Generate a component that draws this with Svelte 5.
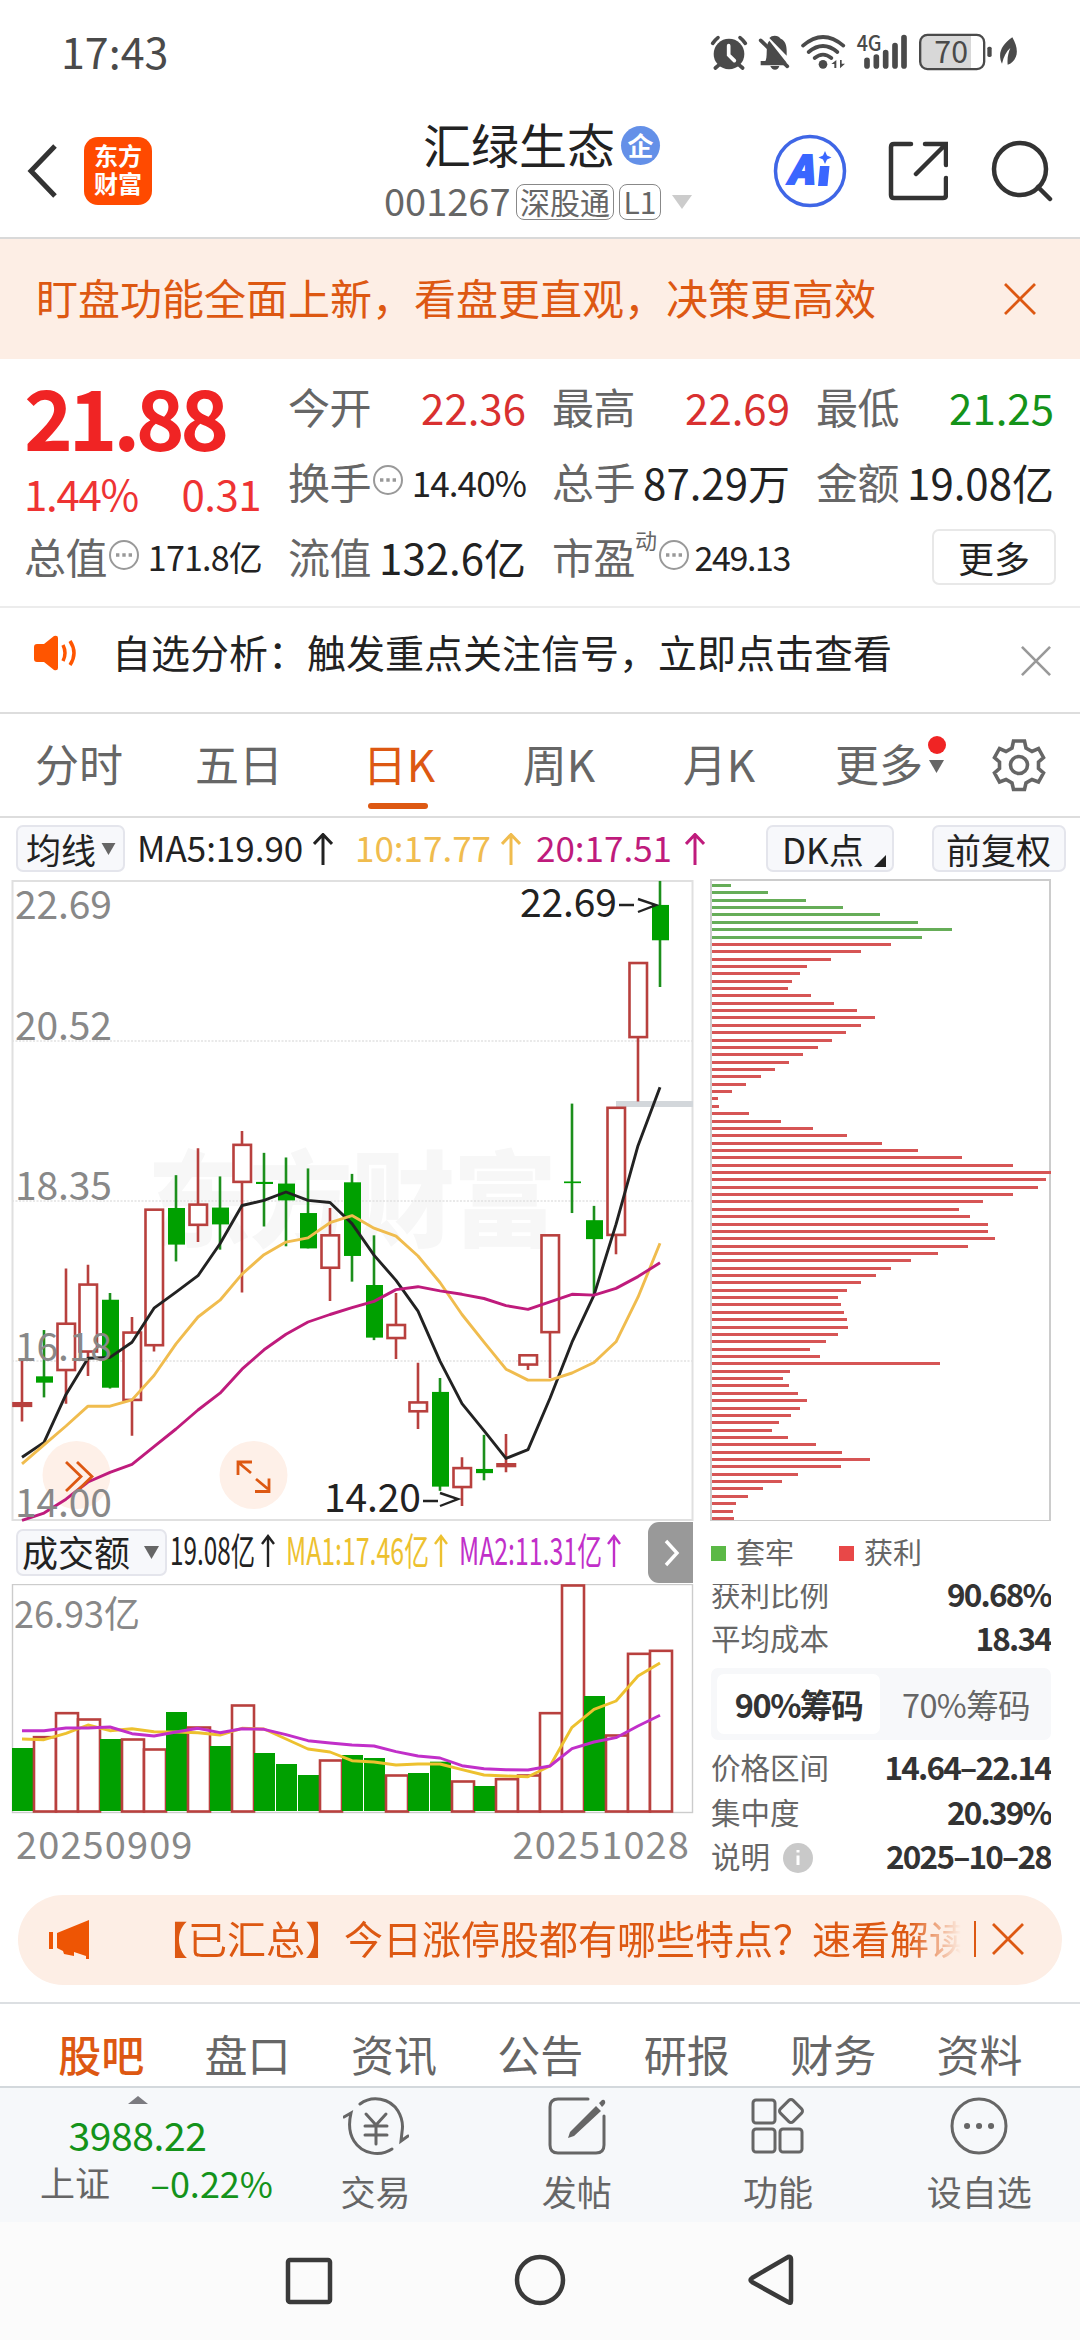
<script>
	let period = $state('日K')
	let section = $state('股吧')
	let chipRange = $state('90%筹码')

	const periods = ['分时', '五日', '日K', '周K', '月K', '更多']
	const sections = ['股吧', '盘口', '资讯', '公告', '研报', '财务', '资料']

	const x = i => 22 + i * 22
	const priceY = v => v * 0.4209 - 9
	const volumeY = v => (v - 222) / 3
	const line = (values, y) => values.map((v, i) => `${x(i)},${y(v).toFixed(1)}`).join(' ')

	// up, high, body top, body bottom, low
	const candles = [
		[1, 1165, 1267, 1273, 1310],
		[0, 1093, 1203, 1218, 1253],
		[1, 947, 1078, 1188, 1268],
		[1, 938, 985, 1144, 1202],
		[0, 1005, 1021, 1230, 1232],
		[1, 1062, 1099, 1259, 1344],
		[1, 807, 807, 1129, 1144],
		[0, 725, 803, 890, 930],
		[1, 661, 795, 843, 884],
		[0, 728, 802, 842, 902],
		[1, 620, 653, 741, 1004],
		[0, 672, 741, 746, 847],
		[0, 683, 745, 785, 894],
		[0, 709, 815, 899, 899],
		[1, 803, 868, 945, 1024],
		[0, 722, 742, 917, 978],
		[0, 868, 986, 1111, 1117],
		[1, 1005, 1081, 1112, 1162],
		[1, 1171, 1265, 1286, 1328],
		[0, 1207, 1240, 1465, 1475],
		[1, 1395, 1421, 1466, 1511],
		[0, 1342, 1423, 1433, 1450],
		[1, 1340, 1412, 1416, 1431],
		[1, 1153, 1153, 1175, 1188],
		[1, 868, 868, 1098, 1207],
		[0, 555, 740, 744, 815],
		[0, 798, 832, 877, 1010],
		[1, 565, 565, 867, 913],
		[1, 221, 221, 397, 550],
		[0, 26, 83, 167, 278]
	]

	const ma5 = [1395, 1360, 1246, 1160, 1158, 1122, 1041, 1003, 964, 888, 797, 785, 765, 785, 790, 840, 915, 975, 1048, 1167, 1268, 1332, 1398, 1377, 1255, 1122, 1010, 842, 655, 516]
	const ma10 = [1411, 1366, 1321, 1274, 1274, 1259, 1201, 1126, 1062, 1022, 960, 914, 884, 874, 838, 821, 851, 870, 917, 980, 1056, 1122, 1186, 1212, 1212, 1195, 1170, 1121, 1015, 887]
	const ma20 = [1545, 1528, 1495, 1454, 1431, 1412, 1370, 1328, 1283, 1243, 1186, 1140, 1103, 1074, 1056, 1040, 1025, 997, 990, 1000, 1008, 1018, 1035, 1044, 1026, 1008, 1010, 994, 966, 933]

	const volumes = [714, 680, 608, 627, 687, 687, 717, 606, 651, 708, 585, 729, 762, 795, 750, 735, 744, 795, 789, 755, 813, 828, 806, 795, 608, 225, 558, 675, 430, 421]
	const volumeUp = [0, 1, 1, 1, 0, 1, 1, 0, 1, 0, 1, 0, 0, 0, 1, 0, 0, 1, 0, 0, 1, 0, 1, 1, 1, 1, 0, 1, 1, 1]
	const volMa1 = [687, 689, 670, 645, 662, 656, 665, 666, 668, 675, 655, 657, 687, 717, 726, 752, 756, 765, 762, 762, 779, 795, 798, 800, 768, 652, 598, 573, 498, 459]
	const volMa2 = [662, 662, 654, 654, 651, 671, 678, 666, 655, 668, 656, 658, 674, 692, 699, 705, 708, 725, 738, 744, 767, 776, 779, 780, 768, 716, 696, 683, 648, 616]

	const trapped = 8
	const chips = [
		57, 168, 281, 393, 505, 617, 719, 629,
		537, 446, 356, 285, 263, 241, 228, 297, 367, 435,
		488, 446, 402, 359, 317, 274, 231, 188, 146, 103,
		60, 17, 22, 110, 206, 302, 404, 509, 617, 749,
		902, 1017, 1001, 978, 903, 813, 741, 775, 828, 827,
		848, 769, 679, 597, 538, 493, 446, 404, 377, 388,
		396, 405, 407, 377, 341, 295, 325, 683, 233, 214,
		232, 259, 286, 263, 237, 200, 180, 229, 313, 389,
		473, 387, 258, 209, 153, 109, 71, 63, 66
	]
</script>

{#snippet cross(size)}
	<svg class="cross" width={size} height={size} viewBox="0 0 32 32">
		<path d="M1 1 31 31M31 1 1 31" />
	</svg>
{/snippet}

{#snippet dots()}
	<svg class="dots" width="32" height="32" viewBox="0 0 32 32">
		<circle cx="16" cy="16" r="14" />
		<path d="M8 16h3.4M14.3 16h3.4M20.6 16h3.4" />
	</svg>
{/snippet}

{#snippet arrow()}
	<svg class="arrow" width="20" height="32" viewBox="0 0 20 32">
		<path d="M10 32V2M1 11 10 1.500l9 9.500" />
	</svg>
{/snippet}

<div class="screen">
	<div class="status">
		<span class="clock">17:43</span>
		<svg width="310" height="40" viewBox="330 35 930 120">
			<g class="ink">
				<circle cx="387" cy="101" r="46" />
				<path d="M494 125c12-12 0-50 14-64l52 66h-70zM482 122h72v13h-72zM508 53q6-7 16-7 12 0 18 9c14 6 18 20 18 36v15z" />
				<path d="M511 137h27q-3 11-13 11t-14-11z" />
				<circle cx="669" cy="132" r="13" />
				<path d="M694 131l15-12v24h-6v-12zM735 130l-15 14v-25h5v11z" />
				<path d="M1206 130c-14-30-2-56 31-79 16 28 20 56 0 74q-6 6-14 8c-2-20 2-36 8-50-12 10-20 26-25 47z" />
				<rect x="1162" y="79" width="13" height="31" rx="5" />
			</g>
			<g class="thick">
				<path d="M338 69q7-10 16-17M436 69q-7-10-16-17M358 133l-12 10M416 133l12 10" />
				<path d="M482 60l80 78" />
				<path d="M609 76q60-52 121 0M626 95q43-36 86 0M644 113q25-20 50 0" />
			</g>
			<path class="hand" d="M386 76v28l17 17" />
			<path class="signal" d="M801 120v17M829 110v27M857 97v40M885 76v61M912 52v85" />
			<text class="net" x="770" y="92" textLength="75" lengthAdjust="spacingAndGlyphs">4G</text>
			<path class="charge" d="M980 44h133v101H980q-20 0-20-22V66q0-22 20-22z" />
			<rect class="cell" x="960.500" y="43.500" width="192" height="103" rx="22" />
			<text class="level" x="1003" y="129" textLength="101" lengthAdjust="spacingAndGlyphs">70</text>
		</svg>
	</div>

	<header>
		<div class="lead">
			<svg width="31" height="56" viewBox="0 0 31 56"><path class="back" d="M28 3 4 28l24 25" /></svg>
			<div class="brand"><span>东方</span><span>财富</span></div>
		</div>
		<div class="title">
			<div class="name">汇绿生态<span class="firm">企</span></div>
			<div class="code">
				<span class="num">001267</span>
				<span class="tag">深股通</span>
				<span class="tag level1">L1</span>
				<svg width="22" height="15" viewBox="0 0 22 15"><path d="M1 0h20L11 14z" fill="#ccc" /></svg>
			</div>
		</div>
		<div class="actions">
			<svg width="74" height="74" viewBox="0 0 74 74">
				<circle class="ai-ring" cx="37" cy="37" r="34.500" />
				<text class="ai" x="14" y="50" textLength="26" lengthAdjust="spacingAndGlyphs">A</text>
				<path d="M47 32h9.500l-2 20H45zM52 17l2 4.500 4.500 2-4.500 2-2 4.500-2-4.500-4.500-2 4.500-2z" fill="#3a66ff" />
			</svg>
			<svg width="60" height="60" viewBox="0 0 60 60">
				<path class="stroke" d="M23 3H6Q3 3 3 6v48q0 3 3 3h49q3 0 3-3V37M37 3h21v21M57 4 28 33" />
			</svg>
			<svg width="62" height="62" viewBox="0 0 62 62">
				<circle class="stroke" cx="29" cy="29" r="26" />
				<path class="stroke" d="M47 47l12 12" />
			</svg>
		</div>
	</header>

	<div class="banner">
		<span>盯盘功能全面上新，看盘更直观，决策更高效</span>
		{@render cross(32)}
	</div>

	<section class="quote">
		<div class="last">
			<strong>21.88</strong>
			<p><span>1.44%</span><span>0.31</span></p>
			<div class="cell-row"><label>总值</label>{@render dots()}<b class="small">171.8亿</b></div>
		</div>
		<div class="cells">
			<div class="cell-row"><label>今开</label><b class="up">22.36</b></div>
			<div class="cell-row"><label>最高</label><b class="up">22.69</b></div>
			<div class="cell-row"><label>最低</label><b class="down">21.25</b></div>
			<div class="cell-row"><label>换手</label>{@render dots()}<b class="small">14.40%</b></div>
			<div class="cell-row"><label>总手</label><b>87.29万</b></div>
			<div class="cell-row"><label>金额</label><b>19.08亿</b></div>
			<div class="cell-row"><label>流值</label><b>132.6亿</b></div>
			<div class="cell-row"><label>市盈<sup>动</sup></label>{@render dots()}<b class="small pe">249.13</b></div>
			<div class="cell-row"><button class="more">更多</button></div>
		</div>
	</section>

	<div class="notice">
		<svg width="46" height="36" viewBox="0 0 46 36">
			<path d="M4 9h7L21 1q4-1 4 2v30q0 3-4 2L11 27H4q-3 0-3-3V12q0-3 3-3z" fill="#ff5500" />
			<path class="wave" d="M30 10q4 8 0 16M37 6q8 12 0 24" />
		</svg>
		<span>自选分析：触发重点关注信号，立即点击查看</span>
		{@render cross(30)}
	</div>

	<nav class="periods">
		{#each periods as name}
			<button class={{ active: period === name }} onclick={() => period = name}>
				{name}
				{#if name === '更多'}
					<i class="dot"></i>
					<svg class="caret" width="15" height="13" viewBox="0 0 15 13"><path d="M0 0h15L7.500 13z" /></svg>
				{/if}
			</button>
		{/each}
		<svg class="gear" width="54" height="54" viewBox="0 0 54 54">
			<path d="M21.500 3h11l1.500 7 6 3.500 6.500-3 5 9-5 4.500v6.500l5 4.500-5 9-6.500-2.500-6 3.500-1.500 6.500h-11l-1.500-6.500-6-3.500L7.500 44l-5-9 5-4.500V24l-5-4.500 5-9 6.500 3 6-3.500z" />
			<circle cx="27" cy="27" r="8.500" />
		</svg>
	</nav>

	<div class="tools">
		<button class="chip line">均线<svg class="caret" width="15" height="12" viewBox="0 0 15 13"><path d="M0 0h15L7.500 13z" /></svg></button>
		<span class="ma m5">MA5:19.90{@render arrow()}</span>
		<span class="ma m10">10:17.77{@render arrow()}</span>
		<span class="ma m20">20:17.51{@render arrow()}</span>
		<button class="chip dk">DK点<svg width="12" height="12" viewBox="0 0 12 12"><path d="M12 0v12H0z" fill="#222" /></svg></button>
		<button class="chip adj">前复权</button>
	</div>

	<div class="board">
		<div class="left">
			<svg class="kline" width="700" height="643" viewBox="0 0 700 643">
				<text class="watermark" x="147" y="360" textLength="410">东方财富</text>
				<path class="grid" d="M12 162h681M12 322h681M12 482h681" />
				<rect class="frame" x="12.500" y="2" width="680" height="639" />
				<path d="M616 225h77" stroke="#d3d7db" stroke-width="6" />
				<circle cx="76.500" cy="596" r="34" fill="#fef0e8" />
				<circle cx="253.500" cy="596" r="34" fill="#fef0e8" />
				{#each candles as [up, high, top, bottom, low], i}
					{#if up}
						<path class="rise" d="M{x(i)} {priceY(high)}V{priceY(top)}M{x(i)} {priceY(bottom)}V{priceY(low)}" />
						<rect class="rise" x={x(i) - 8.5} y={priceY(top)} width="17.500" height={priceY(bottom) - priceY(top)} />
					{:else}
						<path class="fall" d="M{x(i)} {priceY(high)}V{priceY(low)}" />
						<rect x={x(i) - 8} y={priceY(top)} width="17" height={priceY(bottom) - priceY(top)} fill="#00a000" />
					{/if}
				{/each}
				<polyline points={line(ma5, priceY)} stroke="#222" />
				<polyline points={line(ma10, priceY)} stroke="#f0bc4e" />
				<polyline points={line(ma20, priceY)} stroke="#bf1b7c" />
				<path class="glyph" d="M66 583l15 14.500L66 612M77 583l15 14.500L77 612" />
				<path class="glyph" d="M252 583h-14v13M239 584l12 10M256 600l12 10M255 612.500h14v-13" />
				<g class="axis">
					<text x="15" y="40" textLength="97">22.69</text>
					<text x="15" y="161" textLength="97">20.52</text>
					<text x="15" y="321" textLength="97">18.35</text>
					<text x="15" y="482" textLength="97">16.18</text>
					<text x="15" y="638" textLength="97">14.00</text>
				</g>
				<g class="mark">
					<text x="520" y="38" textLength="97">22.69</text>
					<text x="324" y="633" textLength="97">14.20</text>
					<path d="M619 26h15M638 20l18 6-18 7M423 622h15M440 614l18 6-18 7" />
				</g>
			</svg>

			<div class="volume-tools">
				<button class="chip turnover">成交额<svg class="caret" width="15" height="13" viewBox="0 0 15 13"><path d="M0 0h15L7.500 13z" /></svg></button>
				<svg class="volume-ma" width="460" height="62" viewBox="170 0 460 62">
					<text x="170" y="43" textLength="85" lengthAdjust="spacingAndGlyphs" fill="#222">19.08亿</text>
					<path d="M268 45V14M262 22l6-8 6 8" stroke="#222" />
					<text x="286" y="43" textLength="143" lengthAdjust="spacingAndGlyphs" fill="#edc12f">MA1:17.46亿</text>
					<path d="M441 45V14M435 22l6-8 6 8" stroke="#edc12f" />
					<text x="459" y="43" textLength="143" lengthAdjust="spacingAndGlyphs" fill="#c12fc9">MA2:11.31亿</text>
					<path d="M614 45V14M608 22l6-8 6 8" stroke="#c12fc9" />
				</svg>
				<button class="next"><svg width="16" height="28" viewBox="0 0 16 28"><path d="M2 2l11 12L2 26" /></svg></button>
			</div>

			<svg class="volume" width="700" height="230" viewBox="0 0 700 230">
				<rect class="frame" x="12.500" y=".500" width="680" height="228" />
				{#each volumes as v, i}
					{#if volumeUp[i]}
						<rect class="rise" x={x(i) - 10} y={volumeY(v) + .5} width="22" height={227 - volumeY(v)} />
					{:else}
						<rect x={x(i) - 10} y={volumeY(v)} width="21" height={227 - volumeY(v)} fill="#00a000" />
					{/if}
				{/each}
				<polyline points={line(volMa1, volumeY)} stroke="#edc12f" />
				<polyline points={line(volMa2, volumeY)} stroke="#c12fc9" />
				<text x="14" y="44" textLength="126" lengthAdjust="spacingAndGlyphs">26.93亿</text>
			</svg>
			<div class="dates"><span>20250909</span><span>20251028</span></div>
		</div>

		<div class="right">
			<div class="chips">
				{#each chips as w, i}
					<i class={{ trapped: i < trapped }} style:width="{w / 3}px"></i>
				{/each}
			</div>
			<div class="legend"><i class="trapped"></i>套牢<i></i>获利</div>
			<div class="stats">
				<p class="cut"><span>获利比例</span><b>90.68%</b></p>
				<p><span>平均成本</span><b>18.34</b></p>
				<div class="switch">
					{#each ['90%筹码', '70%筹码'] as name}
						<button class={{ on: chipRange === name }} onclick={() => chipRange = name}>{name}</button>
					{/each}
				</div>
				<p><span>价格区间</span><b>14.64–22.14</b></p>
				<p><span>集中度</span><b>20.39%</b></p>
				<p>
					<span>说明</span>
					<svg width="30" height="30" viewBox="0 0 30 30">
						<circle cx="15" cy="15" r="15" fill="#c9c9c9" />
						<path d="M15 12.500V22M15 7v2.500" stroke="#fff" stroke-width="3" />
					</svg>
					<b>2025–10–28</b>
				</p>
			</div>
		</div>
	</div>

	<div class="promo">
		<svg width="48" height="42" viewBox="0 0 48 42">
			<path d="M1 13h4v17H1zM9 14 41 1V40h-3V37l-12-4v4l-10-2-1-3-6-3z" fill="#ee5504" transform="translate(2 0)" />
		</svg>
		<span>【已汇总】今日涨停股都有哪些特点？速看解读</span>
		<i></i>
		{@render cross(32)}
	</div>

	<nav class="sections">
		{#each sections as name}
			<button class={{ active: section === name }} onclick={() => section = name}>{name}</button>
		{/each}
	</nav>

	<footer>
		<div class="index">
			<svg width="20" height="8" viewBox="0 0 20 8"><path d="M10 0l10 8H0z" fill="#7b7b80" /></svg>
			<strong>3988.22</strong>
			<p><span>上证</span><b>–0.22%</b></p>
		</div>
		<button>
			<svg width="66" height="60" viewBox="0 0 66 60">
				<path d="M17 8C29-1 47 2 55 15q6 10 4 21l-1 9 7-5M49 53C37 61 19 58 11 45Q4 34 8 17L1 21" />
				<path d="M23 18l10 11 10-11M33 29v19M22 30h22M22 39h22" />
			</svg>
			交易
		</button>
		<button>
			<svg width="66" height="60" viewBox="0 0 66 60">
				<path d="M44 3H14q-8 0-8 8v38q0 8 8 8h38q8 0 8-8V20" />
				<path d="M52 10l5 5-27 25-6 2 2-6zM55 7l3-3q2-1 3 1t-1 4l-2 2z" fill="#666" stroke="none" />
			</svg>
			发帖
		</button>
		<button>
			<svg width="66" height="60" viewBox="0 0 66 60">
				<rect x="8" y="4" width="22" height="23" rx="3" />
				<rect x="8" y="33" width="22" height="23" rx="3" />
				<rect x="35" y="33" width="22" height="23" rx="3" />
				<rect x="37" y="6" width="18" height="18" rx="3" transform="rotate(45 46 15)" />
			</svg>
			功能
		</button>
		<button>
			<svg width="66" height="60" viewBox="0 0 66 60">
				<circle cx="33" cy="30" r="27" />
				<path class="ellipsis" d="M21 30h.1M33 30h.1M45 30h.1" />
			</svg>
			设自选
		</button>
	</footer>

	<div class="keys">
		<svg width="56" height="56" viewBox="0 0 56 56"><rect x="7" y="8" width="42" height="42" rx="2" /></svg>
		<svg width="56" height="56" viewBox="0 0 56 56"><circle cx="28" cy="28" r="23" /></svg>
		<svg width="56" height="56" viewBox="0 0 56 56"><path d="M48 7v42q0 3-3 1L9 30q-3-2 0-4L45 5q3-1 3 2z" /></svg>
	</div>
</div>

<style>
	:global(body) {
		background: #fff;
	}

	.screen {
		width: 1080px;
		height: 2340px;
		overflow: hidden;
		font-family: "Noto Sans CJK SC", sans-serif;
		color: #222;
		white-space: nowrap;
	}

	.screen :global(*) {
		box-sizing: border-box;
	}

	svg {
		display: block;
		flex: none;
	}

	button {
		padding: 0;
		border: none;
		background: none;
		font: inherit;
		color: inherit;
	}

	p {
		margin: 0;
	}

	.status {
		display: flex;
		align-items: center;
		justify-content: space-between;
		height: 104px;
		padding: 0 60px 0 61px;
	}

	.clock {
		margin-top: -4px;
		font-size: 43px;
		line-height: 62px;
		color: #4a4a4a;
	}

	.ink {
		fill: #4a4a4a;
	}

	.thick,
	.hand,
	.signal,
	.cell {
		fill: none;
		stroke: #4a4a4a;
		stroke-width: 11;
		stroke-linecap: round;
	}

	.hand {
		stroke: #fff;
	}

	.signal {
		stroke-width: 17;
	}

	.cell {
		stroke-width: 7;
	}

	.charge {
		fill: #d8d8d8;
	}

	.net {
		font-size: 64px;
		font-weight: 500;
		fill: #4a4a4a;
	}

	.level {
		font-size: 94px;
		fill: #4a4a4a;
	}

	header {
		display: grid;
		grid-template-columns: 386px 1fr 310px;
		height: 135px;
		border-bottom: 2px solid #d9d9d9;
	}

	.lead {
		display: flex;
		align-items: center;
		gap: 26px;
		padding: 0 0 0 27px;
	}

	.back {
		fill: none;
		stroke: #333;
		stroke-width: 5;
	}

	.brand {
		display: flex;
		flex-direction: column;
		align-items: center;
		justify-content: center;
		width: 68px;
		height: 68px;
		padding-bottom: 4px;
		border-radius: 14px;
		background: #ff4a00;
		color: #fff;
		font-size: 24px;
		font-weight: 700;
		line-height: 28px;
	}

	.title {
		padding-top: 12px;
	}

	.name {
		display: flex;
		align-items: center;
		gap: 6px;
		padding-left: 37px;
		font-size: 48px;
		line-height: 54px;
	}

	.firm {
		width: 39px;
		height: 39px;
		margin-top: 4px;
		border-radius: 50%;
		background: #6490e8;
		color: #fff;
		font-size: 26px;
		font-weight: 700;
		line-height: 37px;
		text-align: center;
	}

	.code {
		display: flex;
		align-items: center;
		margin-top: 14px;
		color: #666;
	}

	.num {
		width: 132px;
		margin: -4px 0 0 -2px;
		font-size: 38px;
		line-height: 38px;
	}

	.tag {
		height: 36px;
		margin-right: 5px;
		padding: 0 3px;
		border: 1px solid #888;
		border-radius: 8px;
		font-size: 30px;
		line-height: 32px;
	}

	.level1 {
		width: 42px;
		margin-right: 10px;
		text-align: center;
	}

	.actions {
		display: flex;
		align-items: center;
		gap: 38px;
		padding-left: 3px;
	}

	.actions svg:nth-child(2) {
		margin-left: 3px;
	}

	.actions svg:last-child {
		margin-left: 5px;
	}

	.stroke {
		fill: none;
		stroke: #333;
		stroke-width: 4.5;
		stroke-linecap: round;
	}

	.ai-ring {
		fill: none;
		stroke: #3f66e6;
		stroke-width: 3.5;
	}

	.ai {
		font-size: 39px;
		font-weight: 900;
		font-style: italic;
		fill: #3a66ff;
		stroke: #3a66ff;
		stroke-width: 2;
	}

	.cross path {
		fill: none;
		stroke: currentColor;
		stroke-width: 2.8;
	}

	.banner {
		display: flex;
		align-items: center;
		justify-content: space-between;
		height: 120px;
		padding: 0 44px 0 36px;
		background: #fdeee5;
		color: #dd5812;
		font-size: 42px;
	}

	.banner span {
		line-height: 60px;
		margin-top: -4px;
	}

	.quote {
		display: grid;
		grid-template-columns: 238px 1fr;
		column-gap: 26px;
		height: 249px;
		padding: 10px 26px 0 24px;
		border-bottom: 2px solid #ececec;
	}

	.last {
		color: #e33;
	}

	.last strong {
		display: block;
		height: 93px;
		font-size: 83px;
		line-height: 93px;
		letter-spacing: -4.4px;
		color: #f02424;
	}

	.last p {
		display: flex;
		justify-content: space-between;
		height: 57px;
		font-size: 42px;
		line-height: 62px;
		letter-spacing: -1.3px;
	}

	.last p span:last-child {
		margin-right: 1px;
		letter-spacing: -.5px;
	}

	.cells {
		display: grid;
		grid-template-columns: repeat(3, 238px);
		column-gap: 26px;
		grid-auto-rows: 75px;
	}

	.cell-row {
		display: flex;
		align-items: center;
		height: 75px;
		font-size: 42px;
		line-height: 62px;
	}

	label {
		margin-top: -2px;
		color: #666;
		letter-spacing: -.5px;
	}

	sup {
		display: inline-block;
		font-size: 22px;
		line-height: 22px;
		vertical-align: 25px;
	}

	b {
		margin-left: auto;
		font-weight: 400;
		color: #222;
	}

	.small {
		font-size: 35px;
		letter-spacing: -.9px;
	}

	.last .small {
		font-size: 34px;
		letter-spacing: -.8px;
	}

	.cells .pe {
		font-size: 34px;
		letter-spacing: -1.4px;
	}

	.up {
		color: #d93030;
	}

	.down {
		color: #14931a;
	}

	.dots {
		margin: -4px 0 0 1px;
	}

	.dots circle {
		fill: none;
		stroke: #999;
		stroke-width: 2;
	}

	.dots path {
		stroke: #999;
		stroke-width: 3.4;
	}

	.more {
		width: 124px;
		height: 56px;
		margin: 0 -2px 0 auto;
		border: 2px solid #e8e8e8;
		border-radius: 7px;
		font-size: 36px;
		line-height: 48px;
	}

	.notice {
		display: flex;
		height: 106px;
		padding: 25px 29px 0 33px;
		border-bottom: 2px solid #ddd;
		font-size: 39px;
	}

	.notice span {
		margin: -10px 0 0 33px;
		height: 56px;
		line-height: 56px;
	}

	.notice > svg {
		margin-top: 2px;
	}

	.notice > :global(.cross) {
		margin: 13px 0 0 auto;
		color: #999;
	}

	.wave {
		fill: none;
		stroke: #ff5500;
		stroke-width: 3.5;
	}

	.periods {
		display: grid;
		grid-template-columns: repeat(6, 160px) 1fr;
		height: 104px;
		border-bottom: 2px solid #ddd;
		font-size: 44px;
		color: #666;
	}

	.periods button {
		position: relative;
		height: 99px;
		padding-right: 2px;
		line-height: 99px;
	}

	.periods .active {
		color: #dd5812;
	}

	.periods .active::after {
		content: "";
		position: absolute;
		left: 48px;
		bottom: 4px;
		width: 60px;
		height: 6px;
		border-radius: 3px;
		background: #dd5812;
	}

	.caret path {
		fill: #666;
	}

	.periods .caret {
		position: absolute;
		left: 129px;
		top: 46px;
	}

	.dot {
		position: absolute;
		left: 128px;
		top: 22px;
		width: 18px;
		height: 18px;
		border-radius: 50%;
		background: #f02424;
	}

	.gear {
		margin: 24px 0 0 32px;
		fill: none;
		stroke: #666;
		stroke-width: 3.6;
	}

	.tools {
		display: flex;
		height: 61px;
		padding: 7px 14px 0 16px;
		font-size: 35px;
	}

	.chip {
		display: flex;
		align-items: center;
		flex: none;
		height: 47px;
		border: 2px solid #e4e5ec;
		border-radius: 7px;
		background: #f7f8fb;
		font-size: 35px;
		line-height: 40px;
	}

	.line {
		width: 109px;
		padding-left: 8px;
		gap: 5px;
	}

	.ma {
		display: flex;
		gap: 10px;
		font-size: 35px;
		line-height: 44px;
	}

	.ma .arrow {
		margin-top: 8px;
	}

	.arrow path {
		fill: none;
		stroke: currentColor;
		stroke-width: 3;
	}

	.m5 {
		width: 218px;
		margin-left: 12px;
	}

	.m10 {
		width: 181px;
		color: #f0bc4e;
	}

	.m20 {
		gap: 13px;
		color: #bf1b7c;
	}

	.dk {
		width: 128px;
		margin-left: auto;
		padding-left: 14px;
		gap: 10px;
	}

	.dk svg {
		margin-top: 24px;
	}

	.adj {
		width: 134px;
		margin-left: 38px;
		padding-left: 12px;
	}

	.board {
		display: grid;
		grid-template-columns: 711px 341px;
		height: 1001px;
	}

	polyline {
		fill: none;
		stroke-width: 2.9;
		stroke-linejoin: round;
	}

	.grid {
		stroke: #e2e2e2;
		stroke-width: 1.5;
		stroke-dasharray: 2 1.5;
	}

	.frame {
		fill: none;
		stroke: #e0e0e0;
		stroke-width: 2;
	}

	.rise {
		fill: none;
		stroke: #b8403e;
		stroke-width: 2.6;
	}

	rect.rise {
		fill: #fff;
	}

	.fall {
		stroke: #1c8f1c;
		stroke-width: 2.6;
	}

	.watermark {
		font-size: 104px;
		font-weight: 900;
		fill: #f7f7f7;
	}

	.glyph {
		fill: none;
		stroke: #dd5812;
		stroke-width: 2.8;
	}

	.axis {
		font-size: 39px;
		fill: #888;
	}

	.mark {
		font-size: 39px;
		fill: #222;
	}

	.mark path {
		fill: none;
		stroke: #222;
		stroke-width: 2.4;
	}

	.volume-tools {
		display: flex;
		height: 62px;
	}

	.turnover {
		width: 151px;
		margin: 7px 3px 0 16px;
		padding-left: 4px;
		gap: 14px;
		font-size: 36px;
		line-height: 36px;
		padding-bottom: 4px;
	}

	.turnover .caret {
		margin-top: 4px;
	}

	.volume-ma {
		font-size: 38px;
	}

	.volume-ma path {
		fill: none;
		stroke-width: 2.4;
	}

	.next {
		width: 45px;
		height: 61px;
		margin-left: 18px;
		padding-left: 16px;
		border-radius: 11px 0 0 11px;
		background: #999;
	}

	.next path {
		fill: none;
		stroke: #fff;
		stroke-width: 3.4;
	}

	.volume text {
		font-size: 37px;
		fill: #888;
	}

	.volume .frame {
		stroke: #ccc;
		stroke-width: 1.4;
	}

	.dates {
		display: flex;
		justify-content: space-between;
		width: 693px;
		padding: 0 3px 0 16px;
		font-size: 38px;
		line-height: 58px;
		letter-spacing: 1.1px;
		color: #888;
	}

	.chips {
		display: flex;
		flex-direction: column;
		justify-content: space-between;
		width: 341px;
		height: 642px;
		margin-left: -1px;
		padding: 3px 0 0;
		border: 2px solid #ccc;
		border-width: 2px 2px 1px;
	}

	.chips i {
		height: 3px;
		background: #d65555;
	}

	.chips .trapped {
		background: #66ad58;
	}

	.legend {
		display: flex;
		align-items: center;
		height: 60px;
		font-size: 29px;
		color: #666;
		line-height: 40px;
	}

	.legend i {
		width: 15px;
		height: 15px;
		margin: 4px 10px 0 45px;
		background: #e84848;
	}

	.legend .trapped {
		margin-left: 0;
		background: #5bb946;
	}

	.stats {
		overflow: hidden;
		width: 340px;
		margin-top: 3px;
	}

	.stats p {
		display: flex;
		align-items: center;
		height: 44.5px;
		font-size: 29.5px;
		line-height: 43px;
		color: #666;
	}

	.stats .cut {
		height: 44px;
		margin-top: -13px;
	}

	.stats p svg {
		margin: 4px 0 0 13px;
	}

	.stats b {
		font-size: 31.5px;
		font-weight: 700;
		letter-spacing: -1.8px;
		color: #333;
	}

	.switch {
		display: flex;
		height: 72px;
		margin: 8px 0 5px;
		padding: 6px;
		border-radius: 7px;
		background: #f7f8fa;
	}

	.switch button {
		width: 163px;
		height: 60px;
		border-radius: 7px;
		font-size: 32.5px;
		line-height: 56px;
		color: #666;
		letter-spacing: -.6px;
	}

	.switch button:last-child {
		padding-left: 9px;
	}

	.switch .on {
		background: #fff;
		font-weight: 700;
		color: #333;
		letter-spacing: -1.4px;
	}

	.promo {
		display: flex;
		align-items: center;
		height: 90px;
		margin: 15px 18px 17px;
		padding-left: 28px;
		border-radius: 45px;
		background: #fdeee5;
		color: #dd5812;
		font-size: 39px;
	}

	.promo span {
		width: 816px;
		margin: -7px 0 0 55px;
		overflow: hidden;
		line-height: 58px;
		mask-image: linear-gradient(90deg, #000 760px, transparent 812px);
	}

	.promo i {
		width: 2px;
		height: 36px;
		margin: -2px 16px 0 9px;
		background: #dd5812;
	}

	.promo > :global(.cross) {
		margin-top: -2px;
	}

	.sections {
		display: grid;
		grid-template-columns: repeat(7, 146.4px);
		height: 86px;
		padding: 0 28px;
		border-top: 2px solid #dcdfe2;
		border-bottom: 2px solid #d3d8dc;
		font-size: 43px;
		color: #666;
	}

	.sections button {
		height: 82px;
		padding-top: 16px;
		line-height: 66px;
	}

	.sections .active {
		color: #dd5812;
		font-weight: 500;
	}

	footer {
		display: grid;
		grid-template-columns: 275px repeat(4, 201.25px);
		height: 134px;
		background: #f6f8fa;
		color: #666;
		font-size: 35px;
	}

	footer button {
		display: flex;
		flex-direction: column;
		align-items: center;
		padding-top: 8px;
		line-height: 69px;
	}

	footer button svg {
		fill: none;
		stroke: #666;
		stroke-width: 3;
		stroke-linecap: round;
	}

	.ellipsis {
		stroke-width: 6;
	}

	.index {
		display: flex;
		flex-direction: column;
		align-items: center;
		padding-top: 8px;
	}

	.index strong {
		font-size: 39px;
		font-weight: 400;
		line-height: 60px;
		letter-spacing: -.4px;
		color: #14931a;
	}

	.index p {
		display: flex;
		width: 233px;
		margin: -9px 0 0 38px;
		line-height: 54px;
	}

	.index b {
		font-size: 36px;
		color: #14931a;
	}

	.keys {
		display: flex;
		justify-content: center;
		gap: 175px;
		height: 118px;
		padding-top: 30px;
		background: #fbfbfb;
	}

	.keys svg {
		fill: none;
		stroke: #3a3a3a;
		stroke-width: 4.5;
	}
</style>
